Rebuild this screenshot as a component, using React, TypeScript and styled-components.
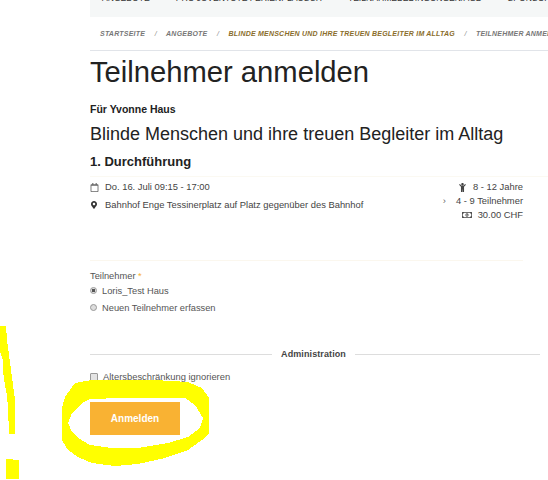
import { createGlobalStyle } from 'styled-components';
import styled from 'styled-components';
import { FaChild, FaMapMarkerAlt, FaRegCalendar, FaRegMoneyBillAlt } from 'react-icons/fa';

const GlobalStyle = createGlobalStyle`
  html, body {
    margin: 0;
    padding: 0;
    background: #fff;
  }
  body {
    font-family: "Liberation Sans", Arial, sans-serif;
    color: #444;
  }
`;

const App = () => {
  return (
    <>
      <GlobalStyle />
      <Page>
        <Nav>
          <NavItem>ANGEBOTE</NavItem>
          <NavItem>PRO JUVENTUTE FERIENPLAUSCH</NavItem>
          <NavItem>TEILNAHMEBEDINGUNGEN/AGB</NavItem>
          <NavItem>SPONSOREN</NavItem>
        </Nav>
        <Breadcrumb>
          <Crumb>STARTSEITE</Crumb>
          <Sep>/</Sep>
          <Crumb>ANGEBOTE</Crumb>
          <Sep>/</Sep>
          <Crumb $active>BLINDE MENSCHEN UND IHRE TREUEN BEGLEITER IM ALLTAG</Crumb>
          <Sep>/</Sep>
          <Crumb>TEILNEHMER ANMELDEN</Crumb>
        </Breadcrumb>
        <Title>Teilnehmer anmelden</Title>
        <Owner>Für Yvonne Haus</Owner>
        <Subtitle>Blinde Menschen und ihre treuen Begleiter im Alltag</Subtitle>
        <SectionTitle>1. Durchführung</SectionTitle>
        <Details>
          <Column>
            <InfoRow>
              <IconSlot><FaRegCalendar size={9} /></IconSlot>
              Do. 16. Juli 09:15 - 17:00
            </InfoRow>
            <InfoRow>
              <IconSlot><FaMapMarkerAlt size={8} color="#333" /></IconSlot>
              Bahnhof Enge Tessinerplatz auf Platz gegenüber des Bahnhof
            </InfoRow>
          </Column>
          <RightColumn>
            <RightRow><FaChild size={9} /> 8 - 12 Jahre</RightRow>
            <RightRow><Chevron>›</Chevron> 4 - 9 Teilnehmer</RightRow>
            <RightRow><FaRegMoneyBillAlt size={10} /> 30.00 CHF</RightRow>
          </RightColumn>
        </Details>
        <Form>
          <FieldLabel>Teilnehmer <Required>*</Required></FieldLabel>
          <RadioRow>
            <RadioDot $checked />
            Loris_Test Haus
          </RadioRow>
          <RadioRow>
            <RadioDot />
            Neuen Teilnehmer erfassen
          </RadioRow>
        </Form>
        <Divider>
          <DividerText>Administration</DividerText>
        </Divider>
        <CheckRow>
          <CheckBox />
          Altersbeschränkung ignorieren
        </CheckRow>
        <SubmitButton>Anmelden</SubmitButton>
        <Scribble viewBox="0 0 548 480" aria-hidden="true">
          <path
            fillRule="evenodd"
            d="M75 383 L92 380 L122 380 L155 380 L188 382 L202 388 L209 398 L209 433 L202 440 L188 450 L165 458 L138 464 L115 466 L92 463 L78 457 L68 450 L62 440 L62 408 L65 397 Z M68 423 L72 413 L82 403 L90 399 L122 398 L155 398 L185 398 L195 405 L203 418 L200 428 L188 437 L168 443 L138 448 L112 448 L90 445 L78 438 L72 432 Z"
          />
          <path d="M0 326 L6 326 L7 340 L9 355 L11 370 L13 385 L15 400 L15 434 L9 434 L8 408 L7 395 L5 385 L3 372 L3 360 L0 352 Z" />
          <path d="M6 459 L19 460 L19 479 L6 479 Z" />
        </Scribble>
      </Page>
    </>
  );
};

export default App;

const Page = styled.div`
  position: relative;
  width: 548px;
  height: 480px;
  box-sizing: border-box;
  padding-left: 90px;
  overflow: hidden;
`;

const Nav = styled.div`
  height: 17px;
  background: #f5f7f7;
  display: flex;
  align-items: flex-end;
  gap: 26px;
  padding: 0 0 14px 12px;
  box-sizing: border-box;
  white-space: nowrap;
  overflow: hidden;
`;

const NavItem = styled.span`
  font-size: 8.6px;
  line-height: 10px;
  color: #333;
`;

const Breadcrumb = styled.div`
  height: 34px;
  box-sizing: border-box;
  border-bottom: 1px solid #e1e4e9;
  display: flex;
  align-items: center;
  gap: 9.5px;
  padding-left: 10px;
  white-space: nowrap;
  overflow: hidden;
`;

const Crumb = styled.span<{ $active?: boolean }>`
  font-size: 7px;
  font-weight: bold;
  font-style: italic;
  letter-spacing: 0.22px;
  color: ${(props) => (props.$active ? '#8a6d2b' : '#777')};
`;

const Sep = styled.span`
  font-size: 7px;
  font-style: italic;
  color: #888;
`;

const Title = styled.h1`
  margin: 3px 0 0;
  font-size: 29.2px;
  line-height: 36px;
  font-weight: normal;
  color: #222;
`;

const Owner = styled.div`
  margin-top: 13px;
  font-size: 10.5px;
  line-height: 12px;
  font-weight: bold;
  color: #222;
`;

const Subtitle = styled.h2`
  margin: 8px 0 0;
  font-size: 18px;
  line-height: 22px;
  font-weight: normal;
  color: #222;
`;

const SectionTitle = styled.h3`
  margin: 9px 0 0;
  padding-bottom: 6px;
  font-size: 13px;
  line-height: 16px;
  font-weight: bold;
  color: #222;
  border-bottom: 1px solid #fbf9f2;
`;

const Details = styled.div`
  display: flex;
  justify-content: space-between;
  width: 433px;
  padding: 4px 0 0;
  height: 84px;
  box-sizing: border-box;
  border-bottom: 1px solid #fbf7ee;
  font-size: 9.4px;
  color: #444;
`;

const Column = styled.div`
  display: flex;
  flex-direction: column;
  gap: 6px;
`;

const InfoRow = styled.div`
  display: flex;
  align-items: center;
  line-height: 12px;
`;

const IconSlot = styled.span`
  display: flex;
  width: 15px;
  color: #666;
`;

const RightColumn = styled.div`
  display: flex;
  flex-direction: column;
  align-items: flex-end;
  gap: 2px;
`;

const RightRow = styled.div`
  display: flex;
  align-items: center;
  gap: 6px;
  line-height: 12px;
`;

const Chevron = styled.span`
  margin-right: 4px;
  color: #666;
`;

const Form = styled.div`
  margin-top: 9px;
  font-size: 9.3px;
  color: #555;
`;

const FieldLabel = styled.div`
  line-height: 12px;
`;

const Required = styled.span`
  color: #f9b233;
`;

const RadioRow = styled.div`
  display: flex;
  align-items: center;
  gap: 5px;
  height: 17px;
`;

const RadioDot = styled.span<{ $checked?: boolean }>`
  width: 7px;
  height: 7px;
  border-radius: 50%;
  box-sizing: border-box;
  border: 1px solid #999;
  background: ${(props) => (props.$checked ? 'radial-gradient(circle, #555 45%, #ddd 50%)' : '#ddd')};
`;

const Divider = styled.div`
  margin-top: 33px;
  width: 450px;
  display: flex;
  align-items: center;
  gap: 9px;
  &::before,
  &::after {
    content: '';
    height: 1px;
    background: #ddd;
  }
  &::before {
    flex: 182;
  }
  &::after {
    flex: 185;
  }
`;

const DividerText = styled.span`
  font-size: 9px;
  font-weight: bold;
  letter-spacing: 0.1px;
  color: #444;
`;

const CheckRow = styled.div`
  margin-top: 12px;
  display: flex;
  align-items: center;
  gap: 5px;
  font-size: 9.4px;
  color: #555;
`;

const CheckBox = styled.span`
  width: 8px;
  height: 8px;
  box-sizing: border-box;
  border: 1px solid #999;
  border-radius: 1px;
  background: #e4e4e4;
`;

const SubmitButton = styled.button`
  display: block;
  margin-top: 20px;
  width: 90px;
  height: 33px;
  border: none;
  padding: 0;
  background: #f9b233;
  color: #fff;
  font-family: inherit;
  font-size: 10px;
  font-weight: bold;
`;

const Scribble = styled.svg`
  position: absolute;
  left: 0;
  top: 0;
  width: 548px;
  height: 480px;
  pointer-events: none;
  fill: #ffff00;
  shape-rendering: crispEdges;
`;
